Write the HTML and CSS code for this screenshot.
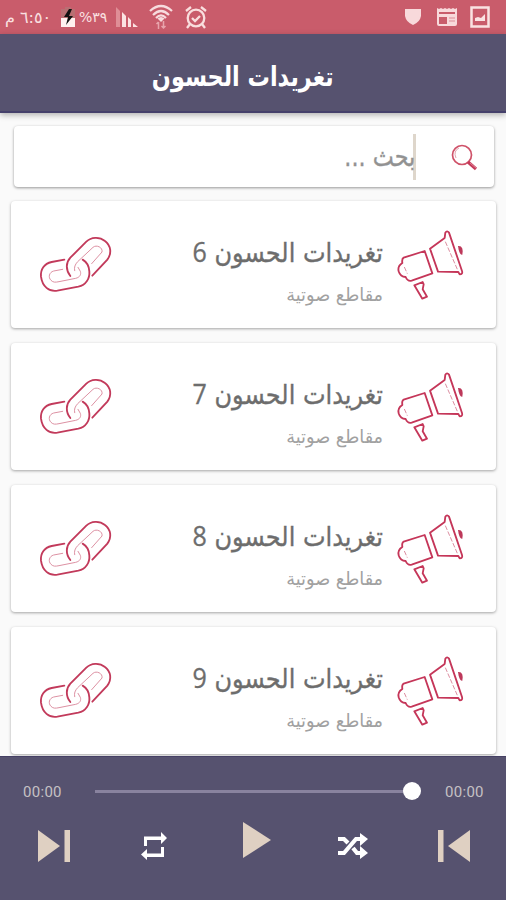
FILE: index.html
```
<!DOCTYPE html>
<html lang="ar">
<head>
<meta charset="utf-8">
<title>تغريدات الحسون</title>
<link rel="stylesheet" href="styles.css">
</head>
<body>
<svg class="defs" width="0" height="0">
  <symbol id="link" viewBox="0 0 270 240">
    <g fill="none" stroke="#c23a5b" stroke-width="5.500" stroke-linecap="round">
      <path d="M103 104L65 111C42 116 31 134 33 155C37 185 57 201 82 197L145 185C168 180 180 160 178 139C177 123 170 111 158 104"/>
      <path d="M121 153C106 134 108 112 121 98L169 50C183 36 208 34 225 48C243 62 246 85 232 104L187 152"/>
    </g>
    <g fill="none" stroke="#dd91a3" stroke-width="3" stroke-linecap="round">
      <path d="M98 133L71 138C57 142 54 157 63 166C70 173 76 172 87 170L137 160C150 157 154 148 151 139L144 127"/>
      <path d="M134 137C132 126 135 119 143 110L189 67C199 58 219 67 216 81L185 116"/>
    </g>
  </symbol>
  <symbol id="horn" viewBox="0 0 270 240">
    <g fill="none" stroke="#c53659" stroke-width="5.500" stroke-linejoin="round">
      <path d="M104 78L41 98Q35 101 37 114Q22 123 26 139Q31 156 47 156Q53 170 65 167L127 145Z"/>
      <path d="M120 71L164 39L166 23Q171 15 177 23L216 138Q219 148 209 148L205 141L144 140Z"/>
      <path d="M73 181L98 171L101 178L98 193L111 215L97 221Z"/>
    </g>
    <path d="M166 50L202 133M43 126L52 146" fill="none" stroke="#dc8ea1" stroke-width="3" stroke-dasharray="14 5"/>
    <path d="M204 63Q222 61 217 89Q210 90 206 74Z" fill="#bd385a"/>
  </symbol>
</svg>
<div class="app">
  <div class="status">
    <span class="time"><span class="fit">٦:٥٠ م</span></span>
    <svg class="battery" width="16" height="22" viewBox="0 0 16 22"><path d="M5 1h6v2h4v9H1V3h4z" fill="#b96f73"/><path d="M1 12h14v9H1z" fill="#fff0ef"/><path d="M9 3L4 11h4l-2 8 7-9H9l3-7z" fill="#111"/></svg>
    <span class="percent"><span class="fit">٣٩%</span></span>
    <svg class="signal" width="24" height="22" viewBox="0 0 24 22"><path d="M1 1l4 4v16H1z" fill="#df8e96"/><path d="M7 6l4 4v11H7zM13 11l3 3v7h-3zM18 17l5 4h-5z" fill="#fbe3e3"/></svg>
    <svg class="wifi" width="24" height="26" viewBox="0 0 24 26"><g fill="none" stroke="#f7dcde" stroke-width="2.200"><path d="M1 7Q12-3 23 7M4 11Q12 3 20 11M7 14Q12 9 17 14"/></g><path d="M8.500 14.500Q12 11.500 15.500 14.500L12 18z" fill="#f7dcde"/><path d="M9.500 25v-7m-2 2l2-2M14.500 17v7m-2-2l2 2 2-2" fill="none" stroke="#e8a4ac" stroke-width="1.500"/></svg>
    <svg class="alarm" width="22" height="23" viewBox="0 0 22 23"><g fill="none" stroke="#f9dede" stroke-width="2.300"><circle cx="11" cy="12" r="8.300"/><path d="M1 5l5-4M16 1l5 4M7 12l3 3 5-5M5 18l-3 4M17 18l3 4"/></g></svg>
    <svg class="shield" width="18" height="18" viewBox="0 0 18 18"><path d="M1 1H17V8Q16 14 9 17Q2 14 1 8z" fill="#f8d9db"/></svg>
    <svg class="news" width="22" height="20" viewBox="0 0 22 20"><path d="M1 1l2 1 2-1 2 1 2-1 2 1 2-1 2 1 2-1 2 1 2-1v16q0 2-2 2H3q-2 0-2-2z" fill="#f8d9db"/><path d="M3 5h16v2H3zM3 10h8v7H3z" fill="#c95c6b"/><path d="M13 11h6M13 14h6" stroke="#db8d97" fill="none"/></svg>
    <svg class="photo" width="20" height="22" viewBox="0 0 20 22"><path d="M1.500 1.500h17v19h-17z" fill="none" stroke="#fae2e2" stroke-width="2.500"/><path d="M5 15v-3l3-1 3 1 4-4v7z" fill="#fae2e2"/></svg>
  </div>
  <div class="header"><span class="fit">تغريدات الحسون</span></div>
  <div class="content">
    <div class="search">
      <span class="hint"><span class="fit">بحث ...</span></span>
      <span class="caret"></span>
      <svg class="glass" width="28" height="28" viewBox="0 0 28 28"><circle cx="12" cy="12" r="9.500" fill="none" stroke="#cf5269" stroke-width="1.700"/><path d="M6 15Q3 8 9 5" fill="none" stroke="#e2a4b0"/><path d="M18 19l8 7" stroke="#c53a59" stroke-width="3.200"/><path d="M20 20l6 5" stroke="#e8a3b1" stroke-width=".7"/></svg>
    </div>
    <div class="card"><svg class="icon"><use href="#link"/></svg><div class="info"><div class="title"><span class="fit">تغريدات الحسون <b>6</b></span></div><div class="sub"><span class="fit">مقاطع صوتية</span></div></div><svg class="icon"><use href="#horn"/></svg></div>
    <div class="card"><svg class="icon"><use href="#link"/></svg><div class="info"><div class="title"><span class="fit">تغريدات الحسون <b>7</b></span></div><div class="sub"><span class="fit">مقاطع صوتية</span></div></div><svg class="icon"><use href="#horn"/></svg></div>
    <div class="card"><svg class="icon"><use href="#link"/></svg><div class="info"><div class="title"><span class="fit">تغريدات الحسون <b>8</b></span></div><div class="sub"><span class="fit">مقاطع صوتية</span></div></div><svg class="icon"><use href="#horn"/></svg></div>
    <div class="card"><svg class="icon"><use href="#link"/></svg><div class="info"><div class="title"><span class="fit">تغريدات الحسون <b>9</b></span></div><div class="sub"><span class="fit">مقاطع صوتية</span></div></div><svg class="icon"><use href="#horn"/></svg></div>
  </div>
  <div class="player">
    <div class="progress"><span>00:00</span><div class="track"><i class="knob"></i></div><span>00:00</span></div>
    <div class="controls">
      <svg width="34" height="34" viewBox="0 0 34 34"><path d="M1 1l22 16L1 33zM27.500 1H33v32h-5.500z"/></svg>
      <svg class="white" width="26" height="28" viewBox="0 0 26 28"><path d="M3 14V4.500h17V0l6 6-6 6V8H6v6zM23 15v10H6v3l-6-5.500 6-5.500v4.500h14V15z"/></svg>
      <svg class="play" width="30" height="38" viewBox="0 0 30 38"><path d="M1 1l28 18L1 37z"/></svg>
      <svg class="white" width="30" height="26" viewBox="0 0 30 26"><g fill="none" stroke="#fff" stroke-width="4.200"><path d="M0 20h6L18 6h6M0 6h6l4 4M15 15l4 5h5"/></g><path d="M22 0l8 6-8 7zM22 13l8 7-8 6z"/></svg>
      <svg width="34" height="34" viewBox="0 0 34 34"><path d="M33 1L11 17l22 16zM1 1h5.500v32H1z"/></svg>
    </div>
  </div>
</div>
</body>
</html>
```
FILE: styles.css
```
* { box-sizing: border-box; }
body { margin: 0; font-family: "DejaVu Sans", sans-serif; }
svg { display: block; flex: none; }
.defs { position: absolute; }
.app { width: 506px; height: 900px; overflow: hidden; display: flex; flex-direction: column; background: #fafafa; }
.fit { display: inline-block; white-space: nowrap; direction: rtl; }
.status { height: 34px; flex: none; background: #c95c6b; display: flex; align-items: center; padding-left: 5px; color: #fae0e1; }
.time { width: 46px; font-size: 16px; }
.battery { margin-left: 9px; }
.percent { width: 28px; margin-left: 3px; font-size: 14px; }
.signal { margin-left: 8px; }
.wifi { margin-left: 10px; }
.alarm { margin-left: 12px; }
.shield { margin-left: 197px; }
.news { margin-left: 14px; }
.photo { margin-left: 12px; }
.header { height: 79px; flex: none; display: flex; align-items: center; justify-content: center; background: #56526f; border-bottom: 2px solid #45406b; color: #fff; font-size: 24px; font-weight: bold; box-shadow: 0 2px 6px rgba(0,0,0,.3); padding: 8px 20px 0 0; }
.header .fit { transform: scale(.93, 1.14); }
.content { flex: 1; min-height: 0; overflow: hidden; padding: 13px 10px 0 11px; }
.search { height: 61px; margin: 0 2px 14px 3px; display: flex; align-items: center; justify-content: flex-end; padding-right: 16px; background: #fff; border-radius: 4px; box-shadow: 0 1px 3px rgba(0,0,0,.4); color: #929292; }
.hint { font-size: 24px; margin-right: -2px; }
.hint .fit { transform: scale(.93, 1.14); transform-origin: right center; -webkit-text-stroke: .3px #929292; }
.caret { width: 3px; height: 46px; background: #ded6cb; }
.glass { margin-left: 34px; }
.card { height: 127px; margin-bottom: 15px; display: flex; align-items: flex-start; padding: 24px 16px 0 19px; background: #fff; border-radius: 4px; box-shadow: 0 1px 3px rgba(0,0,0,.35); }
.icon { width: 90px; height: 80px; }
.info { flex: 1; text-align: right; padding: 11px 7px 0 0; }
.title { height: 34px; line-height: 34px; font-size: 24px; color: #6d6d6d; }
.title .fit { transform: scaleY(1.12); transform-origin: right center; -webkit-text-stroke: .3px #6d6d6d; }
.title b { font: 25px/30px "Open Sans", sans-serif; }
.sub { height: 28px; line-height: 28px; margin-top: 11px; font-size: 17px; color: #a1a1a1; }
.sub .fit { transform: scale(1.04, 1.08); transform-origin: right center; }
.player { height: 144px; flex: none; background: #56526f; border-top: 1px solid #454064; padding: 24px 22px 0 23px; }
.progress { display: flex; align-items: center; height: 22px; font: 15px Roboto, sans-serif; letter-spacing: .3px; color: #c5c1c4; }
.progress span { width: 39px; }
.track { position: relative; width: 318px; height: 3px; background: #89839f; margin: -1px 32px 0 33px; }
.knob { position: absolute; right: -8px; top: -8px; width: 18px; height: 18px; border-radius: 50%; background: #fff; }
.controls { display: flex; align-items: center; justify-content: space-between; padding: 26px 13px 0 14px; fill: #dfd0c2; }
.controls svg:nth-child(2) { margin: 0 -2px; }
.controls svg:nth-child(4) { margin-right: -3px; }
.white { fill: #fff; }
.controls .play { margin: -12px -5px 0 5px; }
```
